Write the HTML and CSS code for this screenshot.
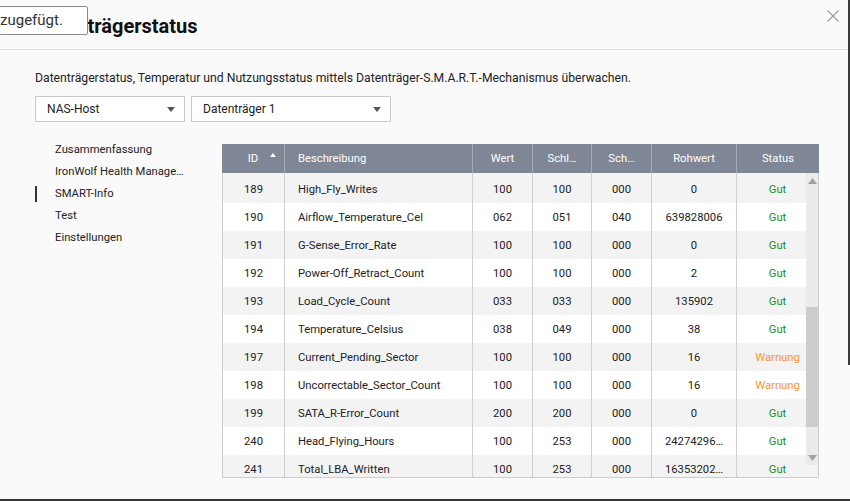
FILE: index.html
```html
<!DOCTYPE html>
<html lang="de">
<head>
<meta charset="utf-8">
<title>Datenträgerstatus</title>
<link rel="stylesheet" href="styles.css">
</head>
<body>
<div class="dialog">
  <header class="head">
    <h1 class="title">Datenträgerstatus</h1>
    <button class="close" aria-label="Schließen">
      <svg width="12" height="12" viewBox="0 0 12 12"><path d="M0.5 0.5L11.5 11.5M11.5 0.5L0.5 11.5" stroke="#9a9a9a" stroke-width="1.1" fill="none"/></svg>
    </button>
  </header>
  <div class="content">
    <p class="desc">Datenträgerstatus, Temperatur und Nutzungsstatus mittels Datenträger-S.M.A.R.T.-Mechanismus überwachen.</p>
    <div class="selects">
      <div class="select s1"><span>NAS-Host</span><i class="caret"></i></div>
      <div class="select s2"><span>Datenträger 1</span><i class="caret"></i></div>
    </div>
    <div class="main">
      <nav class="nav">
        <div class="nav-item">Zusammenfassung</div>
        <div class="nav-item">IronWolf Health Manage…</div>
        <div class="nav-item active">SMART-Info</div>
        <div class="nav-item">Test</div>
        <div class="nav-item">Einstellungen</div>
      </nav>
      <div class="table">
        <div class="row thead">
          <div class="c center">ID<svg class="sort" width="6" height="4" viewBox="0 0 6 4"><path d="M0 4L3 0L6 4Z" fill="#fff"/></svg></div>
          <div class="c left">Beschreibung</div>
          <div class="c center">Wert</div>
          <div class="c center">Schl…</div>
          <div class="c center">Sch…</div>
          <div class="c center">Rohwert</div>
          <div class="c center last">Status</div>
        </div>
        <div class="tbody">
          <div class="row odd first"><div class="c center">189</div><div class="c left">High_Fly_Writes</div><div class="c center">100</div><div class="c center">100</div><div class="c center">000</div><div class="c center">0</div><div class="c center last ok">Gut</div></div>
          <div class="row"><div class="c center">190</div><div class="c left">Airflow_Temperature_Cel</div><div class="c center">062</div><div class="c center">051</div><div class="c center">040</div><div class="c center">639828006</div><div class="c center last ok">Gut</div></div>
          <div class="row odd"><div class="c center">191</div><div class="c left">G-Sense_Error_Rate</div><div class="c center">100</div><div class="c center">100</div><div class="c center">000</div><div class="c center">0</div><div class="c center last ok">Gut</div></div>
          <div class="row"><div class="c center">192</div><div class="c left">Power-Off_Retract_Count</div><div class="c center">100</div><div class="c center">100</div><div class="c center">000</div><div class="c center">2</div><div class="c center last ok">Gut</div></div>
          <div class="row odd"><div class="c center">193</div><div class="c left">Load_Cycle_Count</div><div class="c center">033</div><div class="c center">033</div><div class="c center">000</div><div class="c center">135902</div><div class="c center last ok">Gut</div></div>
          <div class="row"><div class="c center">194</div><div class="c left">Temperature_Celsius</div><div class="c center">038</div><div class="c center">049</div><div class="c center">000</div><div class="c center">38</div><div class="c center last ok">Gut</div></div>
          <div class="row odd"><div class="c center">197</div><div class="c left">Current_Pending_Sector</div><div class="c center">100</div><div class="c center">100</div><div class="c center">000</div><div class="c center">16</div><div class="c center last warn">Warnung</div></div>
          <div class="row"><div class="c center">198</div><div class="c left">Uncorrectable_Sector_Count</div><div class="c center">100</div><div class="c center">100</div><div class="c center">000</div><div class="c center">16</div><div class="c center last warn">Warnung</div></div>
          <div class="row odd"><div class="c center">199</div><div class="c left">SATA_R-Error_Count</div><div class="c center">200</div><div class="c center">200</div><div class="c center">000</div><div class="c center">0</div><div class="c center last ok">Gut</div></div>
          <div class="row"><div class="c center">240</div><div class="c left">Head_Flying_Hours</div><div class="c center">100</div><div class="c center">253</div><div class="c center">000</div><div class="c center">24274296…</div><div class="c center last ok">Gut</div></div>
          <div class="row odd"><div class="c center">241</div><div class="c left">Total_LBA_Written</div><div class="c center">100</div><div class="c center">253</div><div class="c center">000</div><div class="c center">16353202…</div><div class="c center last ok">Gut</div></div>
          <div class="scrollbar">
            <svg class="arr up" width="9" height="6" viewBox="0 0 9 6"><path d="M0 6L4.5 0L9 6Z" fill="#a3a3a3"/></svg>
            <div class="thumb"></div>
            <svg class="arr down" width="9" height="6" viewBox="0 0 9 6"><path d="M0 0L4.5 6L9 0Z" fill="#a3a3a3"/></svg>
          </div>
        </div>
      </div>
    </div>
  </div>
  <div class="tooltip">zugefügt.</div>
  <div class="edge-right"></div>
  <div class="edge-bottom"></div>
</div>
</body>
</html>
```
FILE: styles.css
```css
html, body {
  margin: 0;
  padding: 0;
  background: #fafafa;
}
body {
  font-family: Roboto, "Liberation Sans", sans-serif;
  color: #333;
  width: 850px;
  height: 501px;
  overflow: hidden;
}
.dialog {
  position: relative;
  width: 850px;
  height: 501px;
  background: #fafafa;
}
.head {
  height: 49px;
  border-bottom: 1px solid #dedede;
  display: flex;
  align-items: center;
  justify-content: space-between;
  padding: 0 11px 0 35px;
}
.title {
  margin: 0;
  font-size: 20px;
  font-weight: 700;
  color: #111;
  line-height: 24px;
  padding-top: 2px;
}
.close {
  border: 0;
  background: none;
  padding: 0;
  width: 12px;
  height: 12px;
  margin-bottom: 18px;
  display: block;
}
.close svg { display: block; }
.content {
  padding: 0 0 0 35px;
}
.desc {
  margin: 0;
  padding-top: 20px;
  font-size: 12.2px;
  line-height: 16px;
  color: #222;
}
.selects {
  display: flex;
  gap: 6px;
  margin-top: 10px;
}
.select {
  height: 26px;
  box-sizing: border-box;
  border: 1px solid #c9c9c9;
  background: #fff;
  display: flex;
  align-items: center;
  justify-content: space-between;
  padding: 0 8px 0 11px;
  font-size: 12px;
  color: #222;
}
.s1 { width: 150px; }
.s2 { width: 200px; }
.caret {
  width: 0;
  height: 0;
  border-left: 4px solid transparent;
  border-right: 4px solid transparent;
  border-top: 5px solid #555;
  margin-right: 1px;
}
.main {
  display: flex;
  margin-top: 16px;
}
.nav {
  width: 187px;
  flex: none;
  padding-top: 1px;
}
.nav-item {
  height: 22px;
  line-height: 22px;
  font-size: 11.25px;
  padding-left: 20px;
  color: #222;
  box-sizing: border-box;
  position: relative;
}
.nav-item.active::before {
  content: "";
  position: absolute;
  left: 0;
  top: 3px;
  width: 2px;
  height: 16px;
  background: #333;
}
.table {
  margin-top: 6px;
  width: 597px;
  height: 334px;
  border: 1px solid #cdcdcd;
  border-top: none;
  box-sizing: border-box;
}
.row {
  display: grid;
  grid-template-columns: 62px 188px 60px 59px 60px 85px 81px;
  height: 28px;
  background: #fff;
}
.row.odd { background: #f3f3f3; }
.row.first { height: 30px; }
.c {
  font-size: 11.25px;
  line-height: 30px;
  border-right: 1px solid #cfcfcf;
  white-space: nowrap;
  overflow: hidden;
  box-sizing: border-box;
  color: #222;
}
.row.first .c { line-height: 33px; }
.c.last { border-right: none; }
.center { text-align: center; }
.left { text-align: left; padding-left: 13px; }
.thead {
  height: 29px;
  background: #7f8696;
  margin: 0 -1px;
  grid-template-columns: 63px 188px 60px 59px 60px 85px 82px;
}
.thead .c {
  color: #fff;
  line-height: 30px;
  border-right: 1px solid #a6abb6;
}
.thead .c.last { border-right: none; }
.sort {
  vertical-align: top;
  margin-top: 9px;
  margin-left: 12px;
  margin-right: -18px;
}
.tbody {
  position: relative;
  height: 304px;
  overflow: hidden;
}
.ok { color: #1e8a1e; }
.warn { color: #f7962f; }
.scrollbar {
  position: absolute;
  right: 0;
  top: 0;
  width: 12px;
  height: 292px;
  background: #ebebeb;
}
.thumb {
  position: absolute;
  left: 0;
  top: 134px;
  width: 12px;
  height: 120px;
  background: #cdcdcd;
}
.arr {
  position: absolute;
  left: 2px;
}
.arr.up { top: 5px; }
.arr.down { bottom: 4px; }
.tooltip {
  position: absolute;
  left: -1px;
  top: 6px;
  height: 29px;
  width: 89px;
  box-sizing: border-box;
  background: #fff;
  border: 1px solid #8a8a8a;
  border-radius: 2px;
  font-size: 15px;
  line-height: 27px;
  color: #333;
  padding-left: 0;
}
.edge-right {
  position: absolute;
  right: 0;
  top: 0;
  width: 2px;
  height: 365px;
  background: #3a3a3a;
}
.edge-bottom {
  position: absolute;
  left: 0;
  bottom: 0;
  width: 850px;
  height: 2px;
  background: #333;
}
```
